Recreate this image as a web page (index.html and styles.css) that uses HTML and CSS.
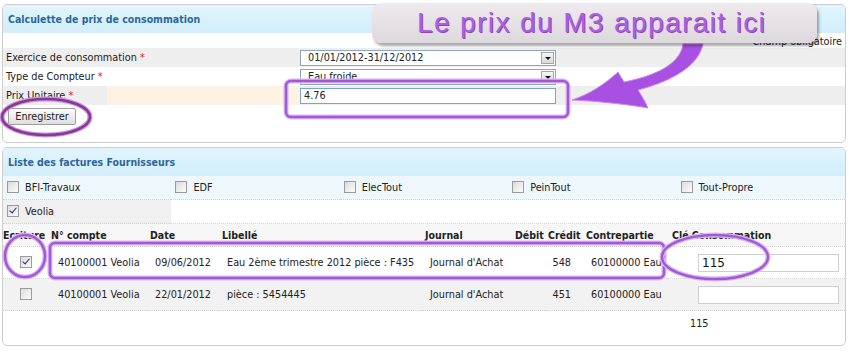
FILE: index.html
```html
<!DOCTYPE html>
<html lang="fr">
<head>
<meta charset="utf-8">
<title>Calculette de prix de consommation</title>
<link rel="stylesheet" href="styles.css">
</head>
<body>
<div class="page">

  <section class="panel">
    <h2 class="panel-head">Calculette de prix de consommation</h2>
    <div class="legend"><span class="req">*</span> Champ obligatoire</div>

    <div class="form-row shade">
      <span class="lbl">Exercice de consommation <span class="req">*</span></span>
      <div class="select"><span>01/01/2012-31/12/2012</span><i class="drop"></i></div>
    </div>
    <div class="form-row">
      <span class="lbl">Type de Compteur <span class="req">*</span></span>
      <div class="select"><span>Eau froide</span><i class="drop"></i></div>
    </div>
    <div class="form-row shade hilite">
      <span class="lbl">Prix Unitaire <span class="req">*</span></span>
      <div class="text-input">4.76</div>
    </div>

    <div class="actions"><button class="btn">Enregistrer</button></div>
  </section>

  <section class="panel">
    <h2 class="panel-head">Liste des factures Fournisseurs</h2>

    <table class="suppliers">
      <tr class="first">
        <td><i class="cb"></i>BFI-Travaux</td>
        <td><i class="cb"></i>EDF</td>
        <td><i class="cb"></i>ElecTout</td>
        <td><i class="cb"></i>PeinTout</td>
        <td><i class="cb"></i>Tout-Propre</td>
      </tr>
      <tr>
        <td class="picked"><i class="cb on"></i>Veolia</td>
        <td></td><td></td><td></td><td></td>
      </tr>
    </table>

    <table class="entries">
      <colgroup>
        <col style="width:45px"><col style="width:99px"><col style="width:72px">
        <col style="width:203px"><col style="width:90px"><col style="width:33px">
        <col style="width:38px"><col style="width:84px"><col>
      </colgroup>
      <thead>
        <tr>
          <th class="first">Ecriture</th><th>N° compte</th><th>Date</th><th>Libellé</th>
          <th>Journal</th><th>Débit</th><th>Crédit</th><th>Contrepartie</th><th class="key">Clé Consommation</th>
        </tr>
      </thead>
      <tbody>
        <tr>
          <td class="tick"><i class="cb on"></i></td>
          <td class="acc">40100001 Veolia</td>
          <td>09/06/2012</td>
          <td>Eau 2ème trimestre 2012 pièce : F435</td>
          <td>Journal d'Achat</td>
          <td></td>
          <td class="num">548</td>
          <td>60100000 Eau</td>
          <td class="key"><div class="text-input qty">115</div></td>
        </tr>
        <tr class="alt">
          <td class="tick"><i class="cb"></i></td>
          <td class="acc">40100001 Veolia</td>
          <td>22/01/2012</td>
          <td>pièce : 5454445</td>
          <td>Journal d'Achat</td>
          <td></td>
          <td class="num">451</td>
          <td>60100000 Eau</td>
          <td class="key"><div class="text-input qty"></div></td>
        </tr>
      </tbody>
      <tfoot>
        <tr><td colspan="8"></td><td class="sum">115</td></tr>
      </tfoot>
    </table>
  </section>

  <svg class="marks" width="850" height="356" viewBox="0 0 850 356">
    <g fill="none">
      <ellipse cx="46" cy="117" rx="44" ry="18" stroke="#c79bd6" stroke-width="5"/>
      <ellipse cx="46" cy="117" rx="44" ry="18" stroke="#8a3598" stroke-width="2.5"/>
      <rect x="286" y="81" width="282" height="36" rx="5" stroke="#dcb8f2" stroke-width="5"/>
      <rect x="286" y="81" width="282" height="36" rx="5" stroke="#a159d8" stroke-width="2.5"/>
      <ellipse cx="25" cy="256" rx="20" ry="21" stroke="#dcb8f2" stroke-width="5"/>
      <ellipse cx="25" cy="256" rx="20" ry="21" stroke="#a159d8" stroke-width="2.5"/>
      <rect x="50" y="243" width="614" height="35" rx="5" stroke="#dcb8f2" stroke-width="5"/>
      <rect x="50" y="243" width="614" height="35" rx="5" stroke="#a159d8" stroke-width="2.5"/>
      <ellipse cx="715" cy="257" rx="53" ry="22" stroke="#dcb8f2" stroke-width="5"/>
      <ellipse cx="715" cy="257" rx="53" ry="22" stroke="#a159d8" stroke-width="2.5"/>
    </g>
    <path d="M683,44 C681,60 664,74 624,82 L618,72 C605,84 590,94 572,100 C596,101 625,104 648,108 C645,101 641,95 638,90 C676,80 699,64 703,44 Z"
          fill="#a850e2" stroke="#c98af0" stroke-width="1"/>
  </svg>

  <div class="callout">Le prix du M3 apparait ici</div>
</div>
</body>
</html>
```

FILE: styles.css
```css
body {
    margin: 0;
    background: #ffffff;
    color: #222222;
    font-family: "DejaVu Sans Condensed", "DejaVu Sans", sans-serif;
    font-size: 10.8px;
}

.page {
    position: relative;
    width: 850px;
    height: 356px;
    padding-top: 4px;
    box-sizing: border-box;
    overflow: hidden;
}

.panel {
    margin: 0 4px 0 2px;
    border: 1px solid #cdcdcd;
    border-radius: 5px;
}

.panel + .panel {
    margin-top: 4px;
}

.panel-head {
    margin: 0;
    height: 28px;
    line-height: 28px;
    padding-left: 5px;
    font-size: 10.5px;
    font-weight: bold;
    color: #2b679c;
    background: linear-gradient(#e2f5fc, #d2eefa);
    border-radius: 4px 4px 0 0;
}

.req {
    color: #e02020;
}

.legend {
    height: 15px;
    line-height: 17px;
    text-align: right;
    padding-right: 3px;
}

/* form rows */
.form-row {
    display: grid;
    grid-template-columns: 297px 256px;
    align-items: center;
    height: 19px;
}

.form-row.shade {
    background: #eeeeee;
}

.form-row.hilite {
    background: linear-gradient(to right, #eeeeee 104px, #fcf3e5 104px, #fcf3e5 297px, #eeeeee 297px);
}

.lbl {
    padding-left: 3px;
}

.select {
    display: flex;
    align-items: center;
    height: 14px;
    border: 1px solid #8fa6bf;
    background: #ffffff;
    padding-left: 7px;
}

.select span {
    flex: 1;
}

.drop {
    width: 13px;
    height: 12px;
    margin-right: 1px;
    border: 1px solid #a5a5a5;
    background: linear-gradient(#f6f6f6, #d9d9d9);
    box-sizing: border-box;
    position: relative;
}

.drop::after {
    content: "";
    position: absolute;
    left: 3px;
    top: 4px;
    border-left: 3px solid transparent;
    border-right: 3px solid transparent;
    border-top: 3px solid #111111;
}

.text-input {
    height: 14px;
    line-height: 14px;
    border: 1px solid #7ba5cf;
    background: #ffffff;
    padding-left: 3px;
}

.actions {
    padding: 3px 0 17px 5px;
}

.btn {
    display: block;
    width: 68px;
    height: 17px;
    padding: 0;
    font: inherit;
    color: #222222;
    border: 1px solid #a0a0a0;
    border-radius: 2px;
    background: linear-gradient(#fbfbfb, #dedede);
}

/* checkboxes */
.cb {
    display: inline-block;
    width: 10px;
    height: 10px;
    border: 1px solid #9b9b9b;
    background: linear-gradient(135deg, #dcdcdc, #fbfbfb);
    vertical-align: -2px;
    margin-right: 6px;
    position: relative;
}

.cb.on::after {
    content: "";
    position: absolute;
    left: 3px;
    top: 0;
    width: 3px;
    height: 6px;
    border-right: 1.5px solid #23238c;
    border-bottom: 1.5px solid #23238c;
    transform: rotate(40deg);
}

/* supplier filter */
.suppliers {
    width: 100%;
    border-collapse: collapse;
    table-layout: fixed;
}

.suppliers td {
    padding: 0 0 0 4px;
    height: 23px;
    border-bottom: 1px dotted #d4d4d4;
    white-space: nowrap;
}

.suppliers tr.first td {
    background: #eef7fb;
}

.suppliers td.picked {
    background: #f0f0f0;
}

/* entries */
.entries {
    width: 100%;
    border-collapse: collapse;
    table-layout: fixed;
}

.entries th {
    height: 22px;
    padding: 0 0 0 3px;
    text-align: left;
    font-size: 10.5px;
    font-weight: bold;
    white-space: nowrap;
    background: #f7f7f7;
    border-bottom: 1px dotted #d4d4d4;
}

.entries th.first {
    padding-left: 0;
}

.entries th.key {
    padding-left: 5px;
}

.entries td {
    height: 31px;
    padding: 0 0 0 8px;
    white-space: nowrap;
    border-bottom: 1px dotted #d4d4d4;
}

.entries td.acc {
    padding-left: 10px;
}

.entries td.tick {
    padding: 0;
    text-align: center;
}

.entries td.tick .cb {
    margin: 0;
}

.entries td.num {
    text-align: right;
    padding: 0 12px 0 0;
}

.entries td.key {
    padding-left: 31px;
}

.entries tr.alt td {
    background: #f2f2f2;
}

.qty {
    width: 136px;
    height: 16px;
    line-height: 16px;
    font-family: "DejaVu Sans", sans-serif;
    font-size: 12px;
    border-color: #cfcfcf;
    color: #111111;
}

.entries tfoot td {
    height: 25px;
    border: none;
}

.entries tfoot td.sum {
    padding-left: 23px;
}

.entries tfoot tr td {
    padding-bottom: 9px;
    vertical-align: middle;
}

/* annotation layer */
.marks {
    position: absolute;
    left: 0;
    top: 0;
    pointer-events: none;
}

.callout {
    position: absolute;
    left: 372px;
    top: 3px;
    width: 445px;
    height: 40px;
    box-sizing: border-box;
    padding-left: 45px;
    line-height: 40px;
    border-radius: 9px;
    background: linear-gradient(#eeeaee, #dcd8dc);
    box-shadow: 2px 3px 3px rgba(0, 0, 0, 0.35);
    font-family: "Liberation Sans", Arial, sans-serif;
    font-size: 28px;
    letter-spacing: 1.4px;
    color: #ac5fe0;
    text-shadow: 1px 1px 0 #8a48b8;
    white-space: nowrap;
}
```
